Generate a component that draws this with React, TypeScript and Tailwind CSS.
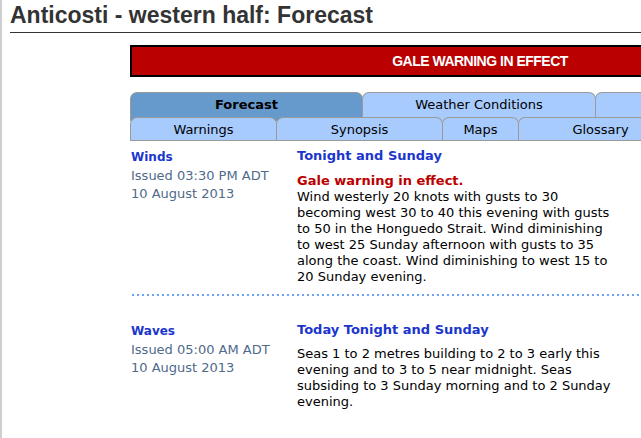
const verdana = '[font-family:"DejaVu_Sans",Verdana,sans-serif]';

const row1 = [
  { label: 'Forecast', w: 'w-[233px]', active: true },
  { label: 'Weather Conditions', w: 'w-[234px]' },
  { label: '', w: 'w-[234px]' },
];

const row2 = [
  { label: 'Warnings', w: 'w-[147px]' },
  { label: 'Synopsis', w: 'w-[167px]' },
  { label: 'Maps', w: 'w-[77px]' },
  { label: 'Glossary', w: 'w-[165px]' },
  { label: '', w: 'w-[150px]' },
];

function Dotted() {
  return (
    <div className="ml-px h-[2px] w-full bg-[repeating-linear-gradient(to_right,#6aa2f5_0_2px,transparent_2px_5px)]" />
  );
}

export default function App() {
  return (
    <div className="h-[438px] w-full overflow-hidden border-l-2 border-[#cfcfcf] bg-white">
      <h1 className="ml-[8px] border-b border-[#333] pt-[2px] pb-[4px] text-[23px] leading-[26px] font-bold text-[#333] [font-family:'Liberation_Sans',Arial,sans-serif]">
        Anticosti - western half: Forecast
      </h1>

      <div className="ml-[128px] w-[700px]">
        {/* warning banner */}
        <div className="mt-[12px] flex h-[32px] items-center justify-center border-2 border-black bg-[#bb0000] text-[14px] font-bold tracking-[-0.5px] text-white [font-family:'Liberation_Sans',Arial,sans-serif]">
          GALE WARNING IN EFFECT
        </div>

        {/* tabs */}
        <div className={`mt-[15px] text-[13px] text-black ${verdana}`}>
          <div className="flex">
            {row1.map((t, i) => (
              <div
                key={i}
                className={`${t.w} ${i > 0 ? '-ml-px' : ''} flex h-[29px] shrink-0 items-start justify-center rounded-t-[7px] border border-b-0 border-[#9a9a9a] pt-[3px] leading-[17px] ${t.active ? 'bg-[#6699cc] font-bold' : 'bg-[#a8cbfd]'}`}
              >
                {t.label}
              </div>
            ))}
          </div>
          <div className="relative -mt-[4px] flex border-b border-[#9a9a9a]">
            {row2.map((t, i) => (
              <div
                key={i}
                className={`${t.w} ${i > 0 ? '-ml-px' : ''} flex h-[23px] shrink-0 items-center justify-center rounded-t-[7px] border border-b-0 border-[#9a9a9a] bg-[#a8cbfd] leading-[17px]`}
              >
                {t.label}
              </div>
            ))}
          </div>
        </div>

        {/* forecast sections */}
        <div className={`${verdana} pl-[1px]`}>
          <div className="flex">
            <div className="w-[166px] shrink-0 pt-[8px]">
              <div className="text-[12px] leading-[16px] font-bold text-[#1b36cc]">Winds</div>
              <div className="mt-[2px] text-[13px] leading-[18px] text-[#4f6a8a]">
                Issued 03:30 PM ADT
                <br />
                10 August 2013
              </div>
            </div>
            <div className="pt-[7px] pb-[9px]">
              <div className="text-[13px] leading-[16px] font-bold text-[#1b36cc]">Tonight and Sunday</div>
              <div className="mt-[8px] text-[13px] leading-[17px] font-bold text-[#bb0000]">Gale warning in effect.</div>
              <p className="text-[13px] leading-[16px] text-black">
                Wind westerly 20 knots with gusts to 30
                <br />
                becoming west 30 to 40 this evening with gusts
                <br />
                to 50 in the Honguedo Strait. Wind diminishing
                <br />
                to west 25 Sunday afternoon with gusts to 35
                <br />
                along the coast. Wind diminishing to west 15 to
                <br />
                20 Sunday evening.
              </p>
            </div>
          </div>

          <Dotted />

          <div className="flex">
            <div className="w-[166px] shrink-0 pt-[27px]">
              <div className="text-[12px] leading-[16px] font-bold text-[#1b36cc]">Waves</div>
              <div className="mt-[2px] text-[13px] leading-[18px] text-[#4f6a8a]">
                Issued 05:00 AM ADT
                <br />
                10 August 2013
              </div>
            </div>
            <div className="pt-[26px]">
              <div className="text-[13px] leading-[16px] font-bold text-[#1b36cc]">Today Tonight and Sunday</div>
              <p className="mt-[8px] text-[13px] leading-[16px] text-black">
                Seas 1 to 2 metres building to 2 to 3 early this
                <br />
                evening and to 3 to 5 near midnight. Seas
                <br />
                subsiding to 3 Sunday morning and to 2 Sunday
                <br />
                evening.
              </p>
            </div>
          </div>
        </div>
      </div>
    </div>
  );
}
